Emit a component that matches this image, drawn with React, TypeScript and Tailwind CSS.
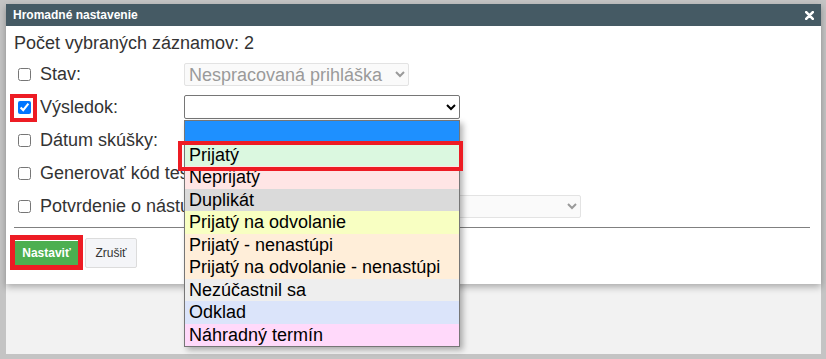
import React from "react";

type Option = { label: string; bg: string };

const OPTIONS: Option[] = [
  { label: "", bg: "bg-[#1e90ff]" },
  { label: "Prijatý", bg: "bg-[#dbf8e0]" },
  { label: "Neprijatý", bg: "bg-[#ffe5e5]" },
  { label: "Duplikát", bg: "bg-[#dadada]" },
  { label: "Prijatý na odvolanie", bg: "bg-[#f8ffc2]" },
  { label: "Prijatý - nenastúpi", bg: "bg-[#ffeed9]" },
  { label: "Prijatý na odvolanie - nenastúpi", bg: "bg-[#ffeed9]" },
  { label: "Nezúčastnil sa", bg: "bg-[#eeeeee]" },
  { label: "Odklad", bg: "bg-[#dbe4fa]" },
  { label: "Náhradný termín", bg: "bg-[#ffd9fa]" },
];

const CloseIcon = () => (
  <svg width="9" height="9" viewBox="0 0 9 9" aria-hidden>
    <path d="M1.2 1.2 L7.8 7.8 M7.8 1.2 L1.2 7.8" stroke="#fff" strokeWidth="2.6" strokeLinecap="round" />
  </svg>
);

const Row: React.FC<{ label: string; checked?: boolean; highlight?: boolean; children?: React.ReactNode }> = ({
  label,
  checked,
  highlight,
  children,
}) => (
  <div className="flex h-[33px] items-center">
    <div className="flex w-[170px] shrink-0 items-center whitespace-nowrap">
      <span className="relative ml-[4px] flex">
        <input type="checkbox" defaultChecked={checked} className="m-0 h-[13px] w-[13px]" />
        {highlight && (
          <span className="pointer-events-none absolute left-[-8px] top-[-7px] h-[28px] w-[27px] border-4 border-[#ed1c24]" />
        )}
      </span>
      <label className="ml-[9px] text-[18px] text-[#333]">{label}</label>
    </div>
    {children}
  </div>
);

export default function App() {
  return (
    <div className="h-[359px] w-[826px] bg-[#c4c4c4] pb-[5px] pl-[6px] pr-[5px] pt-[4px] font-['Liberation_Sans',Arial,sans-serif]">
      <div className="flex h-full flex-col bg-[#f2f2f2]">
        <div className="relative z-10 h-[280px] bg-white shadow-[0_3px_7px_rgba(0,0,0,0.3)]">
          <div className="flex h-[22px] items-center justify-between bg-[#455a64] pl-[7px] pr-[7px]">
            <span className="text-[12px] font-bold text-white">Hromadné nastavenie</span>
            <CloseIcon />
          </div>

          <div className="pl-[8px] pr-[11px]">
            <div className="pt-[7px] text-[18px] leading-[20px] text-[#333]">Počet vybraných záznamov: 2</div>

            <div className="mt-[5px]">
              <Row label="Stav:">
                <select
                  disabled
                  className="h-[23px] w-[225px] rounded-[2px] border border-[#e3e3e3] bg-[#fafafa] text-[18px] text-[#9a9a9a]"
                >
                  <option>Nespracovaná prihláška</option>
                </select>
              </Row>

              <Row label="Výsledok:" checked highlight>
                <div className="relative z-20">
                  <select className="h-[24px] w-[276px] rounded-[2px] border border-[#767676] bg-white text-[18px] text-black">
                    <option value=""></option>
                  </select>
                  <div className="absolute left-0 top-full w-[276px] border border-[#767676] bg-white shadow-[3px_3px_6px_rgba(0,0,0,0.3)]">
                    {OPTIONS.map((o, i) => (
                      <div
                        key={i}
                        className={`${o.bg} h-[22.5px] whitespace-nowrap pl-[4px] text-[18px] leading-[22.5px] text-black`}
                      >
                        {o.label}
                      </div>
                    ))}
                    <span className="pointer-events-none absolute left-[-7px] top-[20px] h-[30px] w-[285px] border-4 border-[#ed1c24]" />
                  </div>
                </div>
              </Row>

              <Row label="Dátum skúšky:" />
              <Row label="Generovať kód testu" />
              <Row label="Potvrdenie o nástupe">
                <select
                  disabled
                  className="h-[23px] w-[397px] rounded-[2px] border border-[#e3e3e3] bg-[#fafafa] text-[18px] text-[#9a9a9a]"
                >
                  <option></option>
                </select>
              </Row>
            </div>

            <div className="mt-[4px] h-px bg-[#808080]" />

            <div className="mt-[10px] flex items-center">
              <div className="relative ml-[1px]">
                <button className="h-[25px] w-[63px] bg-[#4caf50] text-[12px] font-bold text-white">Nastaviť</button>
                <span className="pointer-events-none absolute left-[-5px] top-[-5px] h-[35px] w-[73px] border-[5px] border-[#ed1c24]" />
              </div>
              <button className="ml-[7px] h-[30px] w-[52px] rounded-[2px] border border-[#dcdcdc] bg-[#f4f5f8] text-[12px] text-[#333]">
                Zrušiť
              </button>
            </div>
          </div>
        </div>
      </div>
    </div>
  );
}
